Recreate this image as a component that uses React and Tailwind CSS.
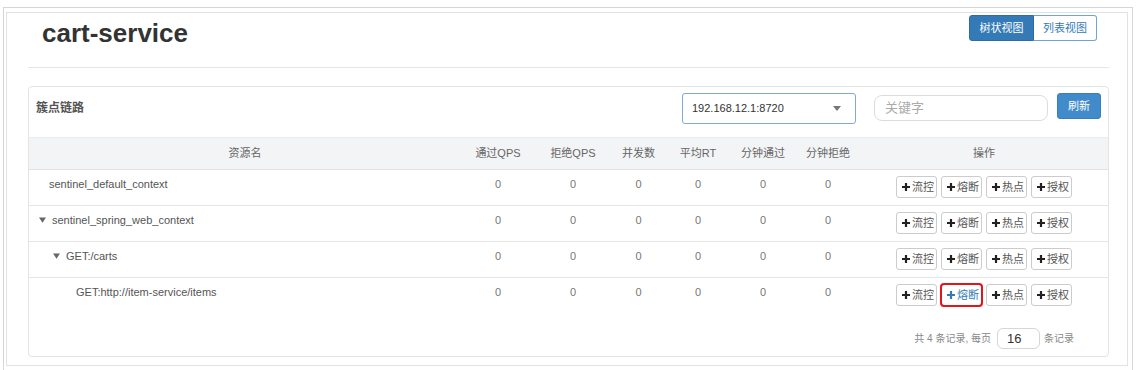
import React from "react";

const rows = [
  { name: "sentinel_default_context", textPad: "pl-[20px]", caret: false },
  { name: "sentinel_spring_web_context", textPad: "pl-[10px]", caret: true },
  { name: "GET:/carts", textPad: "pl-[24px]", caret: true },
  { name: "GET:http://item-service/items", textPad: "pl-[47px]", caret: false, highlight: true },
];

const headers = ["通过QPS", "拒绝QPS", "并发数", "平均RT", "分钟通过", "分钟拒绝"];

const gridCols = "grid grid-cols-[432px_74px_76px_55px_64px_66px_64px_1fr]";

const PlusIcon = ({ className }) => (
  <svg viewBox="0 0 8 8" className={className} fill="currentColor">
    <path d="M2.9 0h2.2v2.9H8v2.2H5.1V8H2.9V5.1H0V2.9h2.9z" />
  </svg>
);

const Caret = () => (
  <svg viewBox="0 0 8 6" className="w-[7px] h-[6px] mr-[6px] text-[#666]" fill="currentColor">
    <path d="M0 0h8L4 6z" />
  </svg>
);

const OpButton = ({ label, highlight }) => (
  <button
    className={
      "h-[22px] w-[41px] flex items-center pl-[5px] gap-[2px] rounded-[3px] border bg-white text-[11px] " +
      (highlight
        ? "border-[#ccc] outline-2 outline-offset-[-1px] outline-[#e3141b] text-[#337ab7]"
        : "border-[#ccc] text-[#555]")
    }
  >
    <PlusIcon className={"w-[8px] h-[8px] " + (highlight ? "text-[#337ab7]" : "text-[#222]")} />
    <span>{label}</span>
  </button>
);

export default function App() {
  return (
    <div className="bg-white w-[1136px] h-[370px] overflow-hidden font-['Liberation_Sans','Noto_Sans_CJK_SC',sans-serif]">
      <div className="mt-[7px] ml-[3px] mr-[3px] h-[400px] border-x border-t border-[#d6d6d6]">
        <div className="ml-[2px] mt-[4px] mr-[4px] h-[354px] border border-[#e2e2e2] pl-[21px] pr-[18px]">
          {/* page header */}
          <div className="h-[54px] flex justify-between items-start pl-[14px] pr-[12px]">
            <h1 className="mt-[5px] text-[26px] leading-[30px] font-bold text-[#333]">cart-service</h1>
            <div className="mt-[2px] flex text-[11px]">
              <button className="h-[26px] w-[65px] rounded-l-[3px] bg-[#337ab7] border border-[#2e6da4] text-white">
                树状视图
              </button>
              <button className="h-[26px] w-[63px] rounded-r-[3px] bg-white border border-[#6fa3d3] border-l-0 text-[#337ab7]">
                列表视图
              </button>
            </div>
          </div>
          <div className="border-t border-[#e6e6e6]" />

          {/* card */}
          <div className="mt-[18px] h-[271px] border border-[#e4e4e4] rounded-[4px] overflow-hidden">
            <div className="h-[51px] flex items-start pl-[7px] pr-[7px] pt-[6px] border-b border-[#ececec]">
              <div className="pt-[7px] text-[12px] leading-[16px] font-bold text-[#555]">簇点链路</div>
              <div className="ml-auto w-[174px] h-[31px] border border-[#7fa9d6] rounded-[3px] flex items-center pl-[9px] pr-[14px] text-[11px] text-[#333]">
                <span>192.168.12.1:8720</span>
                <svg viewBox="0 0 8 5" className="ml-auto w-[8px] h-[5px] text-[#777]" fill="currentColor">
                  <path d="M0 0h8L4 5z" />
                </svg>
              </div>
              <div className="ml-[18px] mt-[2px] w-[174px] h-[26px] border border-[#dcdcdc] rounded-[8px] flex items-center pl-[10px] text-[13px] text-[#aaa]">
                关键字
              </div>
              <button className="ml-[9px] w-[44px] h-[26px] rounded-[3px] bg-[#428bca] border border-[#3a7fbd] text-white text-[11px]">
                刷新
              </button>
            </div>

            {/* table header */}
            <div className={gridCols + " h-[32px] items-center bg-[#f3f4f6] border-b border-[#e2e2e2] text-[11px] text-[#666]"}>
              <div className="text-center">资源名</div>
              {headers.map((h) => (
                <div key={h} className="text-center">
                  {h}
                </div>
              ))}
              <div className="text-center">操作</div>
            </div>

            {rows.map((r, i) => (
              <div
                key={r.name}
                className={
                  gridCols +
                  " h-[36px] items-start pt-[6px] text-[11px] leading-[16px] " +
                  (i < rows.length - 1 ? "border-b border-[#e6e6e6]" : "")
                }
              >
                <div className={"flex items-center text-[#555] " + r.textPad}>
                  {r.caret && <Caret />}
                  <span>{r.name}</span>
                </div>
                {headers.map((h) => (
                  <div key={h} className="text-center text-[#777]">
                    0
                  </div>
                ))}
                <div className="flex justify-center gap-[4px]">
                  <OpButton label="流控" />
                  <OpButton label="熔断" highlight={r.highlight} />
                  <OpButton label="热点" />
                  <OpButton label="授权" />
                </div>
              </div>
            ))}

            {/* pagination */}
            <div className="mt-[14px] flex items-center justify-end pr-[34px] text-[10px] text-[#888]">
              <span>共 4 条记录, 每页</span>
              <div className="ml-[6px] w-[43px] h-[21px] border border-[#d6d6d6] rounded-[6px] flex items-center pl-[9px] text-[13px] text-[#333]">
                16
              </div>
              <span className="ml-[4px]">条记录</span>
            </div>
          </div>
        </div>
      </div>
    </div>
  );
}
